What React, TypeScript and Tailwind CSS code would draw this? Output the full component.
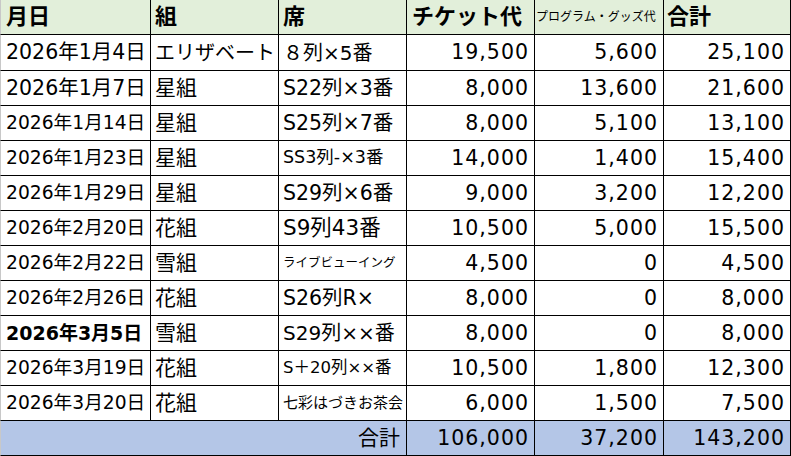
const FONT = "[font-family:'DejaVu_Sans','Noto_Sans_CJK_JP',sans-serif]";

type Row = {
  date: string;
  dateCls: string;
  group: string;
  groupCls: string;
  seat: string;
  seatCls: string;
  ticket: string;
  goods: string;
  total: string;
  h: string;
};

const rows: Row[] = [
  { date: "2026年1月4日", dateCls: "text-[20.5px]", group: "エリザベート", groupCls: "text-[20px]", seat: "８列×5番", seatCls: "text-[20px]", ticket: "19,500", goods: "5,600", total: "25,100", h: "h-[36px]" },
  { date: "2026年1月7日", dateCls: "text-[20.5px]", group: "星組", groupCls: "text-[21px]", seat: "S22列×3番", seatCls: "text-[20.5px]", ticket: "8,000", goods: "13,600", total: "21,600", h: "h-[35px]" },
  { date: "2026年1月14日", dateCls: "text-[18.7px]", group: "星組", groupCls: "text-[21px]", seat: "S25列×7番", seatCls: "text-[20.5px]", ticket: "8,000", goods: "5,100", total: "13,100", h: "h-[35px]" },
  { date: "2026年1月23日", dateCls: "text-[18.7px]", group: "星組", groupCls: "text-[21px]", seat: "SS3列-×3番", seatCls: "text-[17.5px]", ticket: "14,000", goods: "1,400", total: "15,400", h: "h-[35px]" },
  { date: "2026年1月29日", dateCls: "text-[18.7px]", group: "星組", groupCls: "text-[21px]", seat: "S29列×6番", seatCls: "text-[20.5px]", ticket: "9,000", goods: "3,200", total: "12,200", h: "h-[35px]" },
  { date: "2026年2月20日", dateCls: "text-[18.7px]", group: "花組", groupCls: "text-[21px]", seat: "S9列43番", seatCls: "text-[21.5px]", ticket: "10,500", goods: "5,000", total: "15,500", h: "h-[35px]" },
  { date: "2026年2月22日", dateCls: "text-[18.7px]", group: "雪組", groupCls: "text-[21px]", seat: "ライブビューイング", seatCls: "text-[12.5px]", ticket: "4,500", goods: "0", total: "4,500", h: "h-[35px]" },
  { date: "2026年2月26日", dateCls: "text-[18.7px]", group: "花組", groupCls: "text-[21px]", seat: "S26列R×", seatCls: "text-[20.5px]", ticket: "8,000", goods: "0", total: "8,000", h: "h-[35px]" },
  { date: "2026年3月5日", dateCls: "text-[19px] font-bold", group: "雪組", groupCls: "text-[21px]", seat: "S29列××番", seatCls: "text-[20px]", ticket: "8,000", goods: "0", total: "8,000", h: "h-[35px]" },
  { date: "2026年3月19日", dateCls: "text-[18.7px]", group: "花組", groupCls: "text-[21px]", seat: "S＋20列××番", seatCls: "text-[16.5px]", ticket: "10,500", goods: "1,800", total: "12,300", h: "h-[35px]" },
  { date: "2026年3月20日", dateCls: "text-[18.7px]", group: "花組", groupCls: "text-[21px]", seat: "七彩はづきお茶会", seatCls: "text-[15px]", ticket: "6,000", goods: "1,500", total: "7,500", h: "h-[35px]" },
];

const grid = "grid grid-cols-[151px_128px_128px_128px_129px_127px]";
const cell = "flex items-center border-r border-b border-black whitespace-nowrap overflow-hidden leading-none";
const num = `${cell} justify-end pr-[5px] text-[20.5px] tracking-[1px]`;

export default function App() {
  return (
    <div className={`w-[791px] h-[456px] bg-white text-black ${FONT}`}>
      {/* header */}
      <div className={`${grid} h-[35px] bg-[#e2efda] font-bold text-[22px]`}>
        <div className={`${cell} border-l border-l-[#c8c8c8] pl-[5px]`}>月日</div>
        <div className={`${cell} pl-[4px]`}>組</div>
        <div className={`${cell} pl-[4px]`}>席</div>
        <div className={`${cell} pl-[5px]`}>チケット代</div>
        <div className={`${cell} pl-[1px] text-[12px] font-normal`}>プログラム・グッズ代</div>
        <div className={`${cell} pl-[3px]`}>合計</div>
      </div>

      {rows.map((r) => (
        <div key={r.date} className={`${grid} ${r.h}`}>
          <div className={`${cell} border-l border-l-[#c8c8c8] pl-[5px] ${r.dateCls}`}>{r.date}</div>
          <div className={`${cell} pl-[4px] ${r.groupCls}`}>{r.group}</div>
          <div className={`${cell} pl-[4px] ${r.seatCls}`}>{r.seat}</div>
          <div className={num}>{r.ticket}</div>
          <div className={num}>{r.goods}</div>
          <div className={num}>{r.total}</div>
        </div>
      ))}

      {/* totals */}
      <div className={`${grid} h-[35px] bg-[#b4c6e7]`}>
        <div className={`${cell} col-span-3 border-l border-l-[#c8c8c8] justify-end pr-[6px] text-[21px]`}>合計</div>
        <div className={num}>106,000</div>
        <div className={num}>37,200</div>
        <div className={num}>143,200</div>
      </div>
    </div>
  );
}
